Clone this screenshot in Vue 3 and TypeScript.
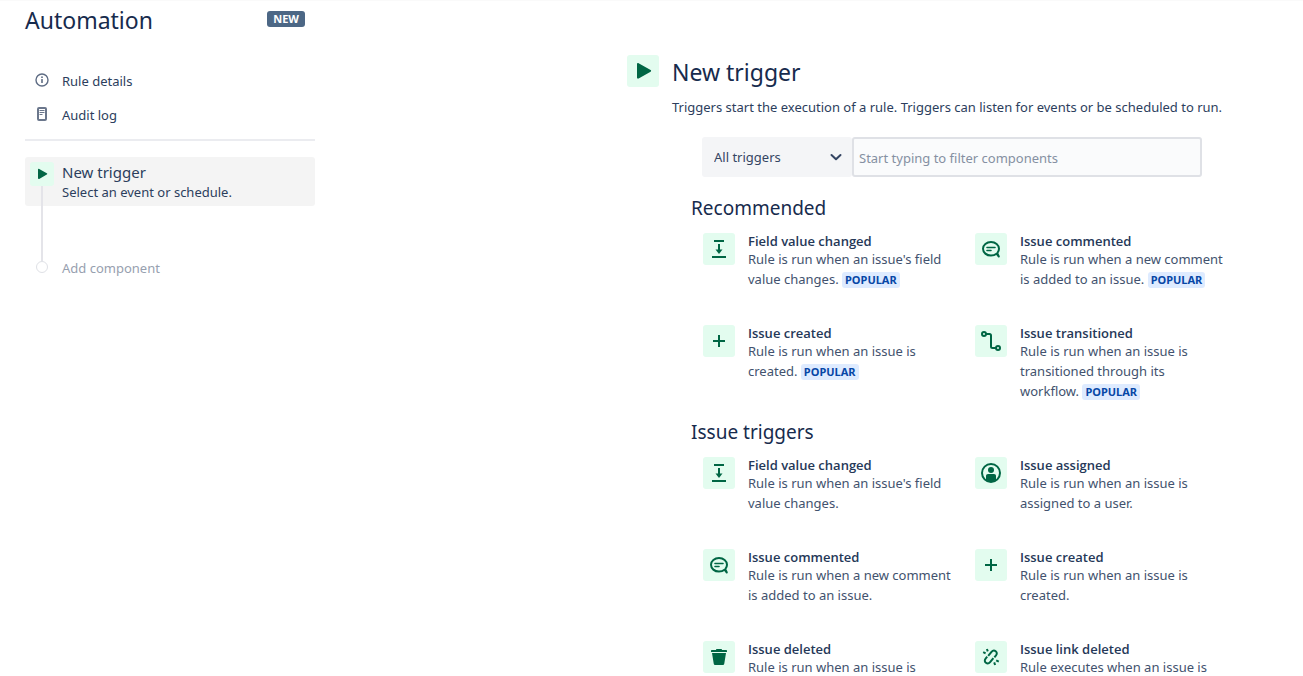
<script setup lang="ts">
import { ref } from 'vue'

type IconName = 'field' | 'comment' | 'plus' | 'transition' | 'user' | 'trash' | 'unlink'

interface Trigger {
  icon: IconName
  title: string
  text: string
  popular?: boolean
}

interface Section {
  title: string
  items: Trigger[]
}

const filter = ref('')
const category = ref('all')

const sections: Section[] = [
  {
    title: 'Recommended',
    items: [
      { icon: 'field', title: 'Field value changed', text: "Rule is run when an issue's field value changes.", popular: true },
      { icon: 'comment', title: 'Issue commented', text: 'Rule is run when a new comment is added to an issue.', popular: true },
      { icon: 'plus', title: 'Issue created', text: 'Rule is run when an issue is created.', popular: true },
      { icon: 'transition', title: 'Issue transitioned', text: 'Rule is run when an issue is transitioned through its workflow.', popular: true },
    ],
  },
  {
    title: 'Issue triggers',
    items: [
      { icon: 'field', title: 'Field value changed', text: "Rule is run when an issue's field value changes." },
      { icon: 'user', title: 'Issue assigned', text: 'Rule is run when an issue is assigned to a user.' },
      { icon: 'comment', title: 'Issue commented', text: 'Rule is run when a new comment is added to an issue.' },
      { icon: 'plus', title: 'Issue created', text: 'Rule is run when an issue is created.' },
      { icon: 'trash', title: 'Issue deleted', text: 'Rule is run when an issue is' },
      { icon: 'unlink', title: 'Issue link deleted', text: 'Rule executes when an issue is' },
    ],
  },
]
</script>

<template>
  <div class="page">
    <aside class="sidebar">
      <header class="brand">
        <h1>Automation</h1>
        <span class="new-tag">NEW</span>
      </header>
      <nav class="links">
        <a href="#details" class="link">
          <svg width="16" height="16" viewBox="0 0 16 16" fill="none" aria-hidden="true">
            <circle cx="8" cy="7" r="6" stroke="#5e6c84" stroke-width="1.4" />
            <rect x="7.2" y="6" width="1.6" height="4" rx=".5" fill="#5e6c84" />
            <circle cx="8" cy="4.2" r=".9" fill="#5e6c84" />
          </svg>
          <span>Rule details</span>
        </a>
        <a href="#audit" class="link">
          <svg width="16" height="16" viewBox="0 0 16 16" fill="none" aria-hidden="true">
            <rect x="4" y="1" width="8" height="12" rx="1" stroke="#6b778c" stroke-width="2" />
            <path d="M5.500 3.500h5M5.500 5.500h5M5.500 7.500h3" stroke="#6b778c" />
          </svg>
          <span>Audit log</span>
        </a>
      </nav>
      <ol class="steps">
        <li>
          <button type="button" class="step current">
            <span class="rail">
              <span class="tile small">
                <svg width="24" height="24" viewBox="0 0 24 24" aria-hidden="true">
                  <path d="M8 7.600c0-.7.6-1 1.200-.7l7.600 4.300c.6.300.6 1 0 1.300l-7.600 4.500c-.6.300-1.200 0-1.200-.7z" fill="#006644" />
                </svg>
              </span>
              <span class="line"></span>
            </span>
            <span class="step-text">
              <span class="step-title">New trigger</span>
              <span class="step-sub">Select an event or schedule.</span>
            </span>
          </button>
        </li>
        <li class="connector" aria-hidden="true"><span class="line"></span></li>
        <li class="step add">
          <span class="rail"><span class="dot"></span></span>
          <span>Add component</span>
        </li>
      </ol>
    </aside>

    <main class="content">
      <div class="panel">
        <header class="head">
          <span class="tile">
            <svg width="32" height="32" viewBox="0 0 32 32" aria-hidden="true">
              <path d="M10 9.200c0-1 .8-1.500 1.600-1l12 6.900c.7.400.7 1.200 0 1.600l-12 6.900c-.8.400-1.600 0-1.600-1z" fill="#006644" />
            </svg>
          </span>
          <div>
            <h2>New trigger</h2>
            <p>Triggers start the execution of a rule. Triggers can listen for events or be scheduled to run.</p>
          </div>
        </header>

        <form class="filters" @submit.prevent>
          <div class="select-wrap">
            <select v-model="category" aria-label="Trigger category">
              <option value="all">All triggers</option>
            </select>
            <svg class="chevron" width="16" height="16" viewBox="0 0 16 16" fill="none" aria-hidden="true">
              <path d="M3.500 6l4.500 4.300L12.500 6" stroke="#344563" stroke-width="2" stroke-linecap="round" stroke-linejoin="round" />
            </svg>
          </div>
          <input v-model="filter" type="text" aria-label="Filter components" placeholder="Start typing to filter components" />
        </form>

        <section v-for="section in sections" :key="section.title" class="group">
          <h3>{{ section.title }}</h3>
          <ul>
            <li v-for="item in section.items" :key="item.title" class="item">
              <span class="tile">
                <svg width="32" height="32" viewBox="0 0 32 32" fill="none" stroke="#006644" stroke-width="2" aria-hidden="true">
                  <template v-if="item.icon === 'field'">
                    <path d="M11 8h10M9 24h14M16 11v6" />
                    <path d="M12.500 16.500h7L16 21z" fill="#006644" stroke="none" />
                  </template>
                  <template v-else-if="item.icon === 'comment'">
                    <path d="M21.500 20.700C20 22 18.100 22.600 16 22.600c-4.400 0-8-3-8-6.800S11.600 9 16 9s8 3 8 6.800c0 1.700-.7 3.100-1.700 4.300l1.500 3.400z" stroke-linejoin="round" />
                    <path d="M12 14.500h8M12 17.500h4" stroke-linecap="round" stroke-width="1.600" />
                  </template>
                  <path v-else-if="item.icon === 'plus'" d="M16 10v12M10 16h12" />
                  <template v-else-if="item.icon === 'transition'">
                    <circle cx="9" cy="9" r="2" />
                    <circle cx="23" cy="23" r="2" />
                    <path d="M11 9h3.500c1 0 1.500.5 1.500 1.500v11c0 1 .5 1.500 1.500 1.500H21" />
                  </template>
                  <template v-else-if="item.icon === 'user'">
                    <circle cx="16" cy="16" r="9" />
                    <circle cx="16" cy="13" r="3" fill="#006644" stroke="none" />
                    <path d="M11 23v-4c0-1.200.8-2 2-2h6c1.200 0 2 .8 2 2v4c-3 2.200-7 2.200-10 0z" fill="#006644" stroke="none" />
                  </template>
                  <path
                    v-else-if="item.icon === 'trash'"
                    d="M13 9c0-.6.4-1 1-1h4c.6 0 1 .4 1 1h4c.6 0 1 .4 1 1v1H8v-1c0-.6.4-1 1-1zM9 12h14l-1.700 10.500c-.2 1-.8 1.500-1.800 1.500h-7c-1 0-1.600-.5-1.800-1.500z"
                    fill="#006644"
                    stroke="none"
                  />
                  <g v-else>
                    <path d="M13.200 14.800l3.300-4c1.200-1.400 2.900-1.600 4.200-.6s1.500 2.700.3 4.200l-1.600 1.900M18.400 17.200l-3.300 4c-1.200 1.400-2.900 1.600-4.200.6s-1.500-2.700-.3-4.200l1.600-1.900" />
                    <path d="M8.200 11.200l2.400 1.200M11.900 8l.9 2.400M21.200 19.400l2.600 1.300M19.200 21.400l.9 2.600" />
                  </g>
                </svg>
              </span>
              <div class="item-text">
                <h4>{{ item.title }}</h4>
                <p>{{ item.text }} <span v-if="item.popular" class="popular">POPULAR</span></p>
              </div>
            </li>
          </ul>
        </section>
      </div>
    </main>
  </div>
</template>

<style>
body {
  margin: 0;
  background: #fff;
}
</style>

<style scoped>
* {
  box-sizing: border-box;
}

.page {
  display: flex;
  justify-content: space-between;
  height: calc(100vh - 3px);
  overflow: hidden;
  border-top: 1px solid #fafafa;
  color: #2c3e5d;
  font-family: 'Noto Sans', 'Open Sans', sans-serif;
  font-size: 13px;
  line-height: 20px;
}

h1,
h2,
h3,
h4,
p,
ul,
ol {
  margin: 0;
  padding: 0;
  list-style: none;
}

h1,
h2,
h3 {
  color: #172b4d;
  font-weight: 450;
}

h1,
h2 {
  font-size: 23px;
  line-height: 28px;
}

.sidebar {
  flex: none;
  width: 315px;
  padding: 5px 0 0 25px;
}

.brand {
  display: flex;
  justify-content: space-between;
  align-items: flex-start;
  padding-right: 10px;
}

.new-tag {
  margin-top: 5px;
  padding: 0 6px;
  border-radius: 3px;
  background: #4c6785;
  color: #fff;
  font-family: 'Open Sans', 'Noto Sans', sans-serif;
  font-size: 11px;
  font-weight: 700;
  line-height: 16px;
}

.links {
  display: flex;
  flex-direction: column;
  margin-top: 30px;
  padding-bottom: 7px;
  border-bottom: 2px solid #ebecf0;
}

.link {
  display: flex;
  align-items: center;
  gap: 12px;
  height: 34px;
  padding-left: 9px;
  color: inherit;
  text-decoration: none;
}

.steps {
  margin-top: 16px;
}

.step {
  display: flex;
  gap: 8px;
  width: 100%;
  padding: 0 0 0 5px;
  border: 0;
  font: inherit;
  color: inherit;
  text-align: left;
}

.current {
  padding-top: 5px;
  border-radius: 3px;
  background: #f4f4f4;
}

.rail {
  display: flex;
  flex-direction: column;
  align-items: center;
  width: 24px;
}

.line {
  flex: 1;
  width: 2px;
  background: #e4e4e9;
}

.step-text {
  display: flex;
  flex-direction: column;
  padding-bottom: 4px;
}

.step-title {
  font-size: 15px;
}

.connector {
  display: flex;
  justify-content: center;
  width: 34px;
  height: 55px;
}

.connector .line {
  flex: none;
}

.add {
  height: 20px;
  line-height: 14px;
  color: #97a0af;
}

.dot {
  width: 12px;
  height: 12px;
  border: 1px solid #dfe1e6;
  border-radius: 50%;
}

.tile {
  display: flex;
  flex: none;
  width: 32px;
  height: 32px;
  border-radius: 3px;
  background: #e3fcef;
}

.small {
  width: 24px;
  height: 24px;
}

.content {
  flex: none;
  padding: 54px 68px 0 0;
}

.panel {
  width: 608px;
}

.head {
  display: flex;
  gap: 13px;
}

.head h2 {
  margin-top: 3px;
}

.head p {
  margin-top: 11px;
}

.filters {
  display: flex;
  width: 500px;
  margin: 20px 0 0 75px;
}

.select-wrap {
  position: relative;
  width: 150px;
}

select {
  width: 100%;
  height: 40px;
  padding: 0 12px;
  border: 0;
  border-radius: 3px;
  background: #f4f5f7;
  color: #344563;
  font: inherit;
  appearance: none;
}

.chevron {
  position: absolute;
  top: 12px;
  right: 8px;
  pointer-events: none;
}

input {
  flex: 1;
  height: 40px;
  padding: 2px 5px 0;
  border: 2px solid #dfe1e6;
  border-radius: 3px;
  background: #fafbfc;
  color: inherit;
  font: inherit;
}

input::placeholder {
  color: #8590a2;
  opacity: 1;
}

.group {
  margin: 19px 0 0 64px;
}

h3 {
  font-size: 19px;
  line-height: 24px;
}

ul {
  display: grid;
  grid-template-columns: 1fr 1fr;
  row-gap: 36px;
  margin-top: 13px;
}

.item {
  display: flex;
  gap: 13px;
  padding: 0 10px 0 12px;
}

h4 {
  color: #253858;
  font-family: 'Open Sans', 'Noto Sans', sans-serif;
  font-size: 13px;
  font-weight: 600;
  line-height: 16px;
}

.item p {
  color: #42526e;
}

.popular {
  display: inline-block;
  padding: 0 3px;
  border-radius: 3px;
  background: #deebff;
  color: #0747a6;
  font-size: 11px;
  font-weight: 700;
  line-height: 16px;
}
</style>
